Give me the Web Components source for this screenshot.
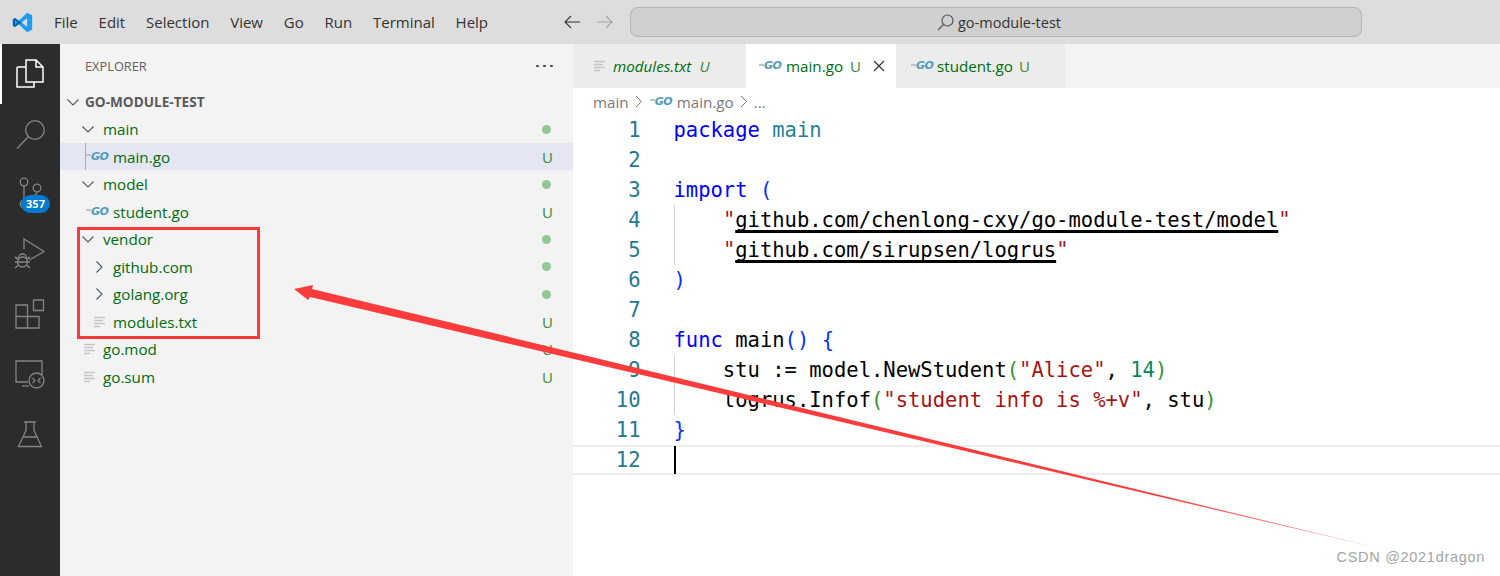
<!DOCTYPE html>
<html>
<head>
<meta charset="utf-8">
<style>
  html, body { margin: 0; height: 100%; background: #fff; overflow: hidden; }
  body { font-family: "Open Sans", "Liberation Sans", sans-serif; }
</style>
</head>
<body>
<vs-app></vs-app>
<script>
const GO_STYLE = `
  .go { display: inline-flex; align-items: center; width: 22px; height: 14px; flex: none; }
  .go i { width: 5px; height: 2px; background: #b9c4cb; margin-top: -3px; flex: none; }
  .go b { font: italic 700 11px/14px "DejaVu Sans", sans-serif; color: #519aba; letter-spacing: -.5px; }
`;
const GO_ICON = '<span class="go"><i></i><b>GO</b></span>';
const TXT_ICON = `<svg width="12" height="12" viewBox="0 0 12 12" fill="none" stroke="#c5c5c5" stroke-width="1.4"><path d="M0 1.5h11M0 4.5h9M0 7.5h11M0 10.5h6"/></svg>`;
const CHEV_DOWN = `<svg width="14" height="14" viewBox="0 0 14 14" fill="none" stroke="#4f5a66" stroke-width="1.1"><path d="M1.5 4.5 7 10l5.5-5.5"/></svg>`;
const CHEV_RIGHT = `<svg width="14" height="14" viewBox="0 0 14 14" fill="none" stroke="#4f5a66" stroke-width="1.1"><path d="M4.5 1.5 10 7l-5.500 5.500"/></svg>`;

class VsApp extends HTMLElement {
  constructor() {
    super();
    this.attachShadow({ mode: 'open' });
  }
  connectedCallback() {
    this.shadowRoot.innerHTML = `
      <style>
        :host { display: flex; flex-direction: column; width: 1500px; height: 576px; position: relative; overflow: hidden; }
        .body { display: flex; flex: 1; min-height: 0; }
      </style>
      <title-bar></title-bar>
      <div class="body">
        <activity-bar></activity-bar>
        <file-tree></file-tree>
        <editor-pane></editor-pane>
      </div>
      <red-marks></red-marks>
    `;
  }
}

class TitleBar extends HTMLElement {
  constructor() {
    super();
    this.attachShadow({ mode: 'open' });
  }
  connectedCallback() {
    const menu = ['File', 'Edit', 'Selection', 'View', 'Go', 'Run', 'Terminal', 'Help'];
    this.shadowRoot.innerHTML = `
      <style>
        :host { display: flex; align-items: center; height: 44px; background: #dddddd; flex: none; color: #333; font-size: 15px; }
        .logo { width: 44px; display: flex; justify-content: center; flex: none; }
        nav { display: flex; gap: 20.800px; padding-left: 10px; width: 500px; box-sizing: border-box; flex: none; }
        .arrows { display: flex; gap: 17px; width: 86px; padding-left: 20px; box-sizing: border-box; flex: none; }
        .search { width: 732px; height: 30px; box-sizing: border-box; background: #d0d0d0; border: 1.500px solid #b4b4b4; border-radius: 8px;
          display: flex; align-items: center; justify-content: center; gap: 4px; padding-left: 6px; font-size: 14.500px; }
      </style>
      <div class="logo">
        <svg width="21" height="21" viewBox="0 0 100 100">
          <path fill="#1f9cf0" d="M72 4 96 16V84L72 96 32 58 14 72 4 66V34L14 28 32 42ZM72 30 46 50 72 70Z"/>
          <path fill="#0065a9" d="M14 28 4 34V66L14 72 32 58 46 50 32 42ZM14 38 26 50 14 62Z"/>
        </svg>
      </div>
      <nav>${menu.map(m => `<span>${m}</span>`).join('')}</nav>
      <div class="arrows">
        <svg width="16" height="14" viewBox="0 0 16 14" fill="none" stroke="#333" stroke-width="1.100"><path d="M16 7H1M7 1 1 7l6 6"/></svg>
        <svg width="16" height="14" viewBox="0 0 16 14" fill="none" stroke="#a3a3a3" stroke-width="1.100"><path d="M0 7h15M9 1l6 6-6 6"/></svg>
      </div>
      <div class="search">
        <svg width="17" height="17" viewBox="0 0 17 17" fill="none" stroke="#555" stroke-width="1.200"><circle cx="10.500" cy="6.500" r="5.500"/><path d="M6.500 10.500 1 16"/></svg>
        <span>go-module-test</span>
      </div>
    `;
  }
}

class ActivityBar extends HTMLElement {
  constructor() {
    super();
    this.attachShadow({ mode: 'open' });
  }
  connectedCallback() {
    this.shadowRoot.innerHTML = `
      <style>
        :host { display: block; width: 60px; background: #2c2c2c; flex: none; position: relative; }
        .item { height: 60px; display: flex; align-items: center; justify-content: center; box-sizing: border-box; position: relative; }
        .active { border-left: 2px solid #fff; padding-right: 2px; }
        svg { display: block; fill: none; stroke: #858585; stroke-width: 1.300; }
        .active svg { stroke: #fff; stroke-width: 1.500; }
        .badge { position: absolute; left: 21px; top: 31px; width: 29px; height: 18px; border-radius: 9px; background: #007acc; color: #fff;
          font: 700 11px/18px "Open Sans", sans-serif; text-align: center; }
      </style>
      <div class="item active">
        <svg width="28" height="30" viewBox="0 0 28 30"><path d="M10 5.500V1h10l7 7v15H10V5.500ZM20 1v7h7"/><path d="M10 8H2a1 1 0 0 0-1 1v19h17v-5"/></svg>
      </div>
      <div class="item">
        <svg width="30" height="30" viewBox="0 0 30 30"><circle cx="20" cy="11" r="9.300"/><path d="M13.500 17.500 2 29.500"/></svg>
      </div>
      <div class="item">
        <svg width="30" height="34" viewBox="0 0 30 34"><circle cx="9" cy="5" r="3.800"/><circle cx="22" cy="11" r="3.800"/><circle cx="9" cy="27" r="3.800"/><path d="M9 9v14M22 15c0 6-13 4-13 8"/></svg>
        <span class="badge">357</span>
      </div>
      <div class="item">
        <svg width="32" height="32" viewBox="0 0 32 32"><path d="M10 11V1l20 12.500L15.500 22"/><path d="M4.500 20a4 4 0 0 1 8 0"/><ellipse cx="8.500" cy="24" rx="5" ry="5"/><path d="M3 24h11M1 19l3 2M16 19l-3 2M1 24h2M14 24h2M1 30l3-2.500M16 30l-3-2.500" stroke-width="1.600"/></svg>
      </div>
      <div class="item">
        <svg width="30" height="30" viewBox="0 0 30 30"><path d="M18.500 1h10v10.500h-10zM1 6h11.500v23H1zM1 17.500h23V29H12.500"/></svg>
      </div>
      <div class="item">
        <svg width="30" height="30" viewBox="0 0 30 30"><path d="M13 23H1V2h26v14"/><path d="M7 27h7"/><circle cx="21.500" cy="21.500" r="7.500"/><path d="M17.500 19l2.500 2.500-2.500 2.500M25.500 19 23 21.500l2.500 2.500"/></svg>
      </div>
      <div class="item">
        <svg width="26" height="28" viewBox="0 0 26 28"><path d="M7 2h12M9 2v8.500L1.500 26.500h23L17 10.500V2M6 17h14"/></svg>
      </div>
    `;
  }
}

class TreeRow extends HTMLElement {
  constructor() {
    super();
    this.attachShadow({ mode: 'open' });
  }
  connectedCallback() {
    const pad = this.getAttribute('pad') || '0';
    const gap = this.getAttribute('gap') || '0';
    const kind = this.getAttribute('icon');
    const icon = { down: CHEV_DOWN, right: CHEV_RIGHT, go: GO_ICON, txt: TXT_ICON }[kind] || '';
    const status = this.getAttribute('status');
    const badge = status === 'dot' ? '<span class="dot"></span>' : '<span class="u">U</span>';
    this.shadowRoot.innerHTML = `
      <style>
        ${GO_STYLE}
        :host { display: flex; align-items: center; height: 27.500px; position: relative; color: #006c10; font-size: 15.200px; }
        :host([selected]) { background: #e4e6f1; }
        :host([selected])::before { content: ""; position: absolute; left: 25px; top: 0; bottom: 0; width: 1px; background: #a9a9a9; }
        .ic { display: flex; align-items: center; margin-left: ${pad}px; margin-right: ${gap}px; flex: none; }
        .name { flex: 1; }
        .dot { width: 9px; height: 9px; border-radius: 50%; background: #93c795; margin-right: 22px; }
        .u { width: 14px; margin-right: 18.500px; font-size: 15px; color: #388a34; text-align: center; }
      </style>
      <span class="ic">${icon}</span>
      <span class="name"><slot></slot></span>
      ${badge}
    `;
  }
}

class FileTree extends HTMLElement {
  constructor() {
    super();
    this.attachShadow({ mode: 'open' });
  }
  connectedCallback() {
    const rows = [
      ['main', 'down', 21, 8, 'dot'],
      ['main.go', 'go', 26, 5, 'u', true],
      ['model', 'down', 21, 8, 'dot'],
      ['student.go', 'go', 26, 5, 'u'],
      ['vendor', 'down', 21, 8, 'dot'],
      ['github.com', 'right', 32, 7, 'dot'],
      ['golang.org', 'right', 32, 7, 'dot'],
      ['modules.txt', 'txt', 34, 7, 'u'],
      ['go.mod', 'txt', 24, 7, 'u'],
      ['go.sum', 'txt', 24, 7, 'u']
    ];
    this.shadowRoot.innerHTML = `
      <style>
        :host { display: block; width: 513px; background: #f3f3f3; flex: none; color: #616161; }
        .head { display: flex; justify-content: space-between; align-items: center; height: 44px; padding: 0 20.500px 0 25px; font-size: 12.800px; }
        .dots { display: flex; gap: 4.500px; }
        .dots i { width: 2.500px; height: 2.500px; border-radius: 50%; background: #424242; }
        .project { display: flex; align-items: center; height: 27.300px; font-size: 13.600px; font-weight: 700; gap: 5px; padding-left: 6px; color: #5a5a5a; }
      </style>
      <div class="head"><span>EXPLORER</span><span class="dots"><i></i><i></i><i></i></span></div>
      <div class="project">${CHEV_DOWN}<span>GO-MODULE-TEST</span></div>
      ${rows.map(r => `<tree-row icon="${r[1]}" pad="${r[2]}" gap="${r[3]}" status="${r[4]}"${r[5] ? ' selected' : ''}>${r[0]}</tree-row>`).join('')}
    `;
  }
}

class EditorPane extends HTMLElement {
  constructor() {
    super();
    this.attachShadow({ mode: 'open' });
  }
  connectedCallback() {
    this.shadowRoot.innerHTML = `
      <style>
        ${GO_STYLE}
        :host { display: flex; flex-direction: column; flex: 1; min-width: 0; background: #fff; }
        .tabs { display: flex; height: 44px; background: #f3f3f3; flex: none; color: #006c10; font-size: 15.200px; }
        .tab { display: flex; align-items: center; background: #ececec; box-sizing: border-box; flex: none; }
        .tab.on { background: #fff; }
        .u { color: #388a34; font-size: 15px; }
        .crumbs { display: flex; align-items: center; height: 27px; padding-left: 20px; color: #7a7a7a; font-size: 15.200px; flex: none; }
        .crumbs svg { flex: none; }
      </style>
      <div class="tabs">
        <div class="tab" style="width:173px;padding-left:21px;font-style:italic">
          ${TXT_ICON}<span style="margin-left:7px">modules.txt</span><span class="u" style="margin-left:8px">U</span>
        </div>
        <div class="tab on" style="width:150px;padding-left:13px">
          ${GO_ICON}<span style="margin-left:5px">main.go</span><span class="u" style="margin-left:7px">U</span>
          <svg style="margin-left:12px" width="12" height="12" viewBox="0 0 12 12" fill="none" stroke="#333" stroke-width="1.200"><path d="M1 1l10 10M11 1 1 11"/></svg>
        </div>
        <div class="tab" style="width:169px;padding-left:15px">
          ${GO_ICON}<span style="margin-left:4px">student.go</span><span class="u" style="margin-left:6px">U</span>
        </div>
      </div>
      <div class="crumbs">
        <span>main</span>
        <svg style="margin:0 7px 0 6px" width="8" height="13" viewBox="0 0 8 13" fill="none" stroke="#777" stroke-width="1"><path d="M1 1l5.500 5.500L1 12"/></svg>
        ${GO_ICON}<span style="margin-left:5px">main.go</span>
        <svg style="margin:0 6px" width="8" height="13" viewBox="0 0 8 13" fill="none" stroke="#777" stroke-width="1"><path d="M1 1l5.500 5.500L1 12"/></svg>
        <span>...</span>
      </div>
      <code-view></code-view>
    `;
  }
}

class CodeView extends HTMLElement {
  constructor() {
    super();
    this.attachShadow({ mode: 'open' });
  }
  connectedCallback() {
    const k = s => `<span style="color:#0000ff">${s}</span>`;
    const t = s => `<span style="color:#267f99">${s}</span>`;
    const s = s => `<span style="color:#a31515">${s}</span>`;
    const n = s => `<span style="color:#098658">${s}</span>`;
    const b = s => `<span style="color:#0431fa">${s}</span>`;
    const g = s => `<span style="color:#319331">${s}</span>`;
    const link = u => `${s('"')}<span class="link">${u}</span>${s('"')}`;
    const lines = [
      `${k('package')} ${t('main')}`,
      '',
      `${k('import')} ${b('(')}`,
      `<i class="guide"></i>    ${link('github.com/chenlong-cxy/go-module-test/model')}`,
      `<i class="guide"></i>    ${link('github.com/sirupsen/logrus')}`,
      b(')'),
      '',
      `${k('func')} main${b('()')} ${b('{')}`,
      `<i class="guide"></i>    stu := model.NewStudent${g('(')}${s('"Alice"')}, ${n('14')}${g(')')}`,
      `<i class="guide"></i>    logrus.Infof${g('(')}${s('"student info is %+v"')}, stu${g(')')}`,
      b('}'),
      '<i class="cursor"></i>'
    ];
    this.shadowRoot.innerHTML = `
      <style>
        :host { display: block; flex: 1; font: 20.500px/30px "DejaVu Sans Mono", "Liberation Mono", monospace; color: #000; }
        .line { display: flex; height: 30px; box-sizing: border-box; }
        .num { width: 67.500px; text-align: right; color: #237893; flex: none; }
        .txt { margin-left: 33px; white-space: pre; position: relative; flex: 1; }
        .cur { border-top: 2px solid #eeeeee; border-bottom: 2px solid #eeeeee; line-height: 26px; }
        .link { color: #000; text-decoration: underline; text-decoration-thickness: 2.500px; text-underline-offset: 3px; text-decoration-skip-ink: none; }
        .guide { position: absolute; left: 0; top: 0; bottom: 0; width: 1px; background: #d3d3d3; }
        .cursor { position: absolute; left: 0; top: -1px; bottom: -1px; width: 2px; background: #000; }
      </style>
      ${lines.map((l, i) => `<div class="line${i === 11 ? ' cur' : ''}"><span class="num">${i + 1}</span><span class="txt">${l}</span></div>`).join('')}
    `;
  }
}

// red box and arrow drawn on top of the screenshot, plus the watermark
class RedMarks extends HTMLElement {
  constructor() {
    super();
    this.attachShadow({ mode: 'open' });
  }
  connectedCallback() {
    this.shadowRoot.innerHTML = `
      <style>
        :host { position: absolute; inset: 0; display: block; pointer-events: none; }
        svg { position: absolute; left: 0; top: 0; }
        .box { position: absolute; left: 77px; top: 227px; width: 183px; height: 112px; box-sizing: border-box; border: 3px solid #f93a3a; }
        .mark { position: absolute; right: 15px; top: 548px; font: 14.500px/18px "Liberation Sans", sans-serif; color: #a3a3a3; letter-spacing: .7px; }
      </style>
      <div class="box"></div>
      <svg width="1500" height="576" viewBox="0 0 1500 576">
        <defs>
          <linearGradient id="fade" gradientUnits="userSpaceOnUse" x1="1150" y1="0" x2="1385" y2="0">
            <stop offset="0" stop-color="#fc3c3c"/><stop offset="1" stop-color="#ffb0b0"/>
          </linearGradient>
        </defs>
        <polygon fill="url(#fade)" points="294,289 313,285 312,289 1384,549.500 310,297 308,300"/>
      </svg>
      <span class="mark">CSDN @2021dragon</span>
    `;
  }
}

customElements.define('vs-app', VsApp);
customElements.define('title-bar', TitleBar);
customElements.define('activity-bar', ActivityBar);
customElements.define('tree-row', TreeRow);
customElements.define('file-tree', FileTree);
customElements.define('editor-pane', EditorPane);
customElements.define('code-view', CodeView);
customElements.define('red-marks', RedMarks);
</script>
</body>
</html>
